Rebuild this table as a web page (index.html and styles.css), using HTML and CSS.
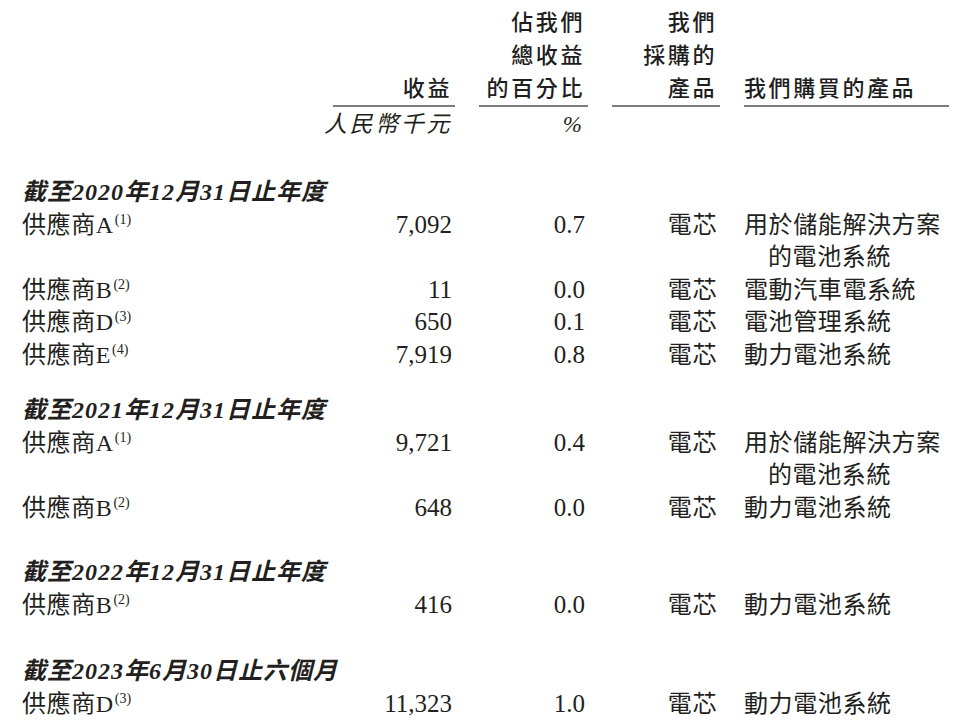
FILE: index.html
```html
<!DOCTYPE html>
<html lang="zh-Hant">
<head>
<meta charset="utf-8">
<title>供應商</title>
<link rel="stylesheet" href="styles.css">
</head>
<body>
<div class="table">
  <div class="row head">
    <div></div>
    <div class="hcell r">收益</div>
    <div class="hcell r">佔我們<br>總收益<br>的百分比</div>
    <div class="hcell r">我們<br>採購的<br>產品</div>
    <div class="hcell l">我們購買的產品</div>
  </div>
  <div class="row units">
    <div></div>
    <div class="unit r">人民幣千元</div>
    <div class="unit r pct">%</div>
    <div></div>
    <div></div>
  </div>

  <div class="section s1">截至2020年12月31日止年度</div>
  <div class="row">
    <div class="name">供應商A<sup>(1)</sup></div>
    <div class="num">7,092</div>
    <div class="num">0.7</div>
    <div class="r">電芯</div>
    <div class="prod">用於儲能解決方案的電池系統</div>
  </div>
  <div class="row">
    <div class="name">供應商B<sup>(2)</sup></div>
    <div class="num">11</div>
    <div class="num">0.0</div>
    <div class="r">電芯</div>
    <div class="prod">電動汽車電系統</div>
  </div>
  <div class="row">
    <div class="name">供應商D<sup>(3)</sup></div>
    <div class="num">650</div>
    <div class="num">0.1</div>
    <div class="r">電芯</div>
    <div class="prod">電池管理系統</div>
  </div>
  <div class="row">
    <div class="name">供應商E<sup>(4)</sup></div>
    <div class="num">7,919</div>
    <div class="num">0.8</div>
    <div class="r">電芯</div>
    <div class="prod">動力電池系統</div>
  </div>

  <div class="section s2">截至2021年12月31日止年度</div>
  <div class="row">
    <div class="name">供應商A<sup>(1)</sup></div>
    <div class="num">9,721</div>
    <div class="num">0.4</div>
    <div class="r">電芯</div>
    <div class="prod">用於儲能解決方案的電池系統</div>
  </div>
  <div class="row">
    <div class="name">供應商B<sup>(2)</sup></div>
    <div class="num">648</div>
    <div class="num">0.0</div>
    <div class="r">電芯</div>
    <div class="prod">動力電池系統</div>
  </div>

  <div class="section s3">截至2022年12月31日止年度</div>
  <div class="row">
    <div class="name">供應商B<sup>(2)</sup></div>
    <div class="num">416</div>
    <div class="num">0.0</div>
    <div class="r">電芯</div>
    <div class="prod">動力電池系統</div>
  </div>

  <div class="section s4">截至2023年6月30日止六個月</div>
  <div class="row">
    <div class="name">供應商D<sup>(3)</sup></div>
    <div class="num">11,323</div>
    <div class="num">1.0</div>
    <div class="r">電芯</div>
    <div class="prod">動力電池系統</div>
  </div>
</div>
</body>
</html>
```

FILE: styles.css
```css
html, body {
  margin: 0;
  padding: 0;
  background: #ffffff;
}

body {
  color: #231f20;
  font-family: "Liberation Serif", "Noto Sans CJK TC", serif;
  font-size: 24px;
}

.table {
  padding: 4px 0 0 22px;
  width: 926px;
}

.row {
  display: grid;
  grid-template-columns: 284px 119px 106px 105px 205px;
  column-gap: 27px;
  align-items: start;
  line-height: 32.5px;
}

.r { text-align: right; }
.l { text-align: left; }

.row > div {
  letter-spacing: 0.6px;
}

.head {
  align-items: end;
}

.head .hcell {
  font-family: "Noto Sans CJK TC", sans-serif;
  font-weight: 500;
  font-size: 22px;
  line-height: 33px;
  letter-spacing: 2.6px;
  color: #1e1e1e;
  border-bottom: 2px solid #7c7c7c;
  padding-bottom: 2px;
}

.head .hcell.r {
  margin-right: -2.6px;
  padding-right: 2.6px;
}

.units {
  line-height: 33px;
  padding-top: 1px;
}

.row > .unit {
  font-style: italic;
  font-size: 23px;
  letter-spacing: 2.6px;
  white-space: nowrap;
  justify-self: end;
  margin-right: 0;
}

.row > .unit.pct {
  font-family: "Liberation Serif", serif;
  font-size: 23px;
  letter-spacing: 0;
  margin-right: 0;
  padding-right: 3px;
}

.section {
  font-weight: bold;
  font-style: italic;
  font-size: 24px;
  letter-spacing: 1px;
  line-height: 32.5px;
}

.s1 { margin-top: 35px; }
.s2 { margin-top: 23px; }
.s3 { margin-top: 32px; }
.s4 { margin-top: 34px; }

.name {
  font-size: 24px;
}

.name sup {
  font-size: 14px;
  line-height: 0;
  vertical-align: 9px;
  letter-spacing: 0;
  margin-left: 1px;
}

.row > .num {
  text-align: right;
  font-size: 25px;
  letter-spacing: 0;
}

.prod {
  padding-left: 1em;
  text-indent: -1em;
}
```
